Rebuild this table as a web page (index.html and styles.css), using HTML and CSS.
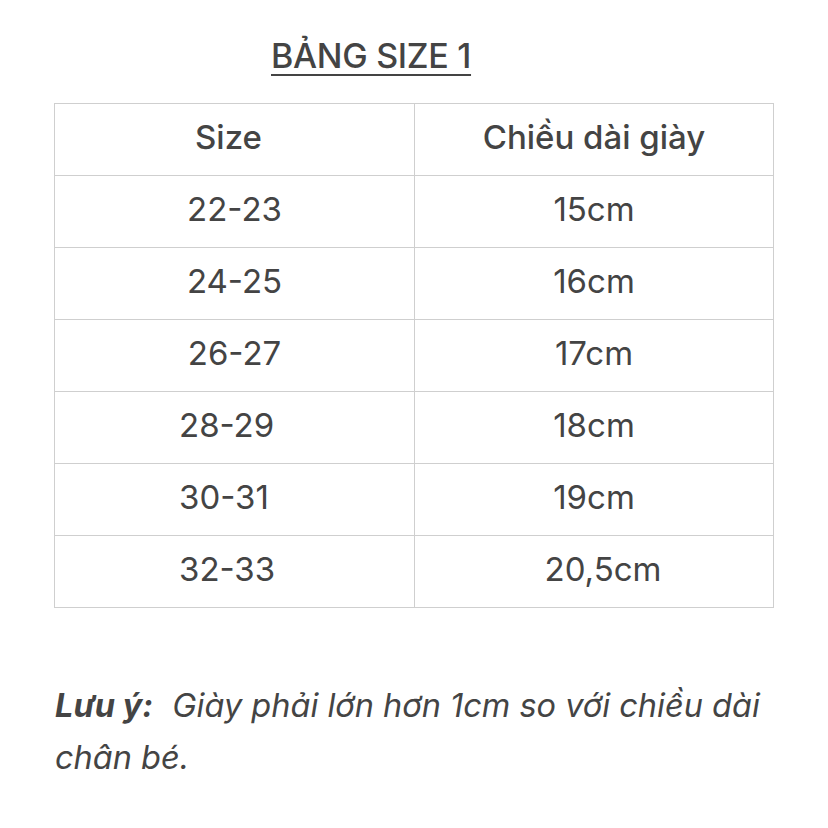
FILE: index.html
```html
<!DOCTYPE html>
<html lang="vi">
<head>
<meta charset="utf-8">
<link rel="stylesheet" href="styles.css">
</head>
<body>
<div class="page">
  <h1 class="title">BẢNG SIZE 1</h1>
  <table class="size-table">
    <tr class="head"><th class="size-head">Size</th><th>Chiều dài giày</th></tr>
    <tr><td>22-23</td><td>15cm</td></tr>
    <tr><td>24-25</td><td>16cm</td></tr>
    <tr><td>26-27</td><td>17cm</td></tr>
    <tr><td class="left">28-29</td><td>18cm</td></tr>
    <tr><td class="left">30-31</td><td>19cm</td></tr>
    <tr><td class="left">32-33</td><td class="shift-right">20,5cm</td></tr>
  </table>
  <p class="note"><b class="label">Lưu ý:</b> Giày phải lớn hơn 1cm so với chiều dài chân bé.</p>
</div>
</body>
</html>
```
FILE: styles.css
```css
html, body { margin: 0; padding: 0; background: #fff; }
body { font-family: Inter, "Liberation Sans", sans-serif; color: #444; }
.page { padding: 36px 54px 0 54px; width: 720px; }
.title {
  margin: 0 0 27px 217px;
  font-size: 34px;
  font-weight: 500;
  text-decoration: underline;
  text-underline-offset: 6px;
  text-decoration-thickness: 2px;
  line-height: 40px;
  letter-spacing: -0.3px;
}
.size-table {
  border-collapse: collapse;
  width: 720px;
  table-layout: fixed;
}
.size-table th, .size-table td {
  box-sizing: border-box;
  border: 1px solid #cfcfcf;
  height: 72px;
  padding: 0 0 6px 0;
  text-align: center;
  font-size: 33px;
  white-space: pre;
}
.size-table th { font-weight: 500; }
.size-table td { font-weight: 400; }
.size-table th:first-child { width: 360px; }
.size-table .size-head { padding-right: 12px; }
.size-table td.left { text-align: left; padding-left: 124px; }
.size-table td.shift-right { padding-left: 18px; }
.note {
  margin: 72px 0 0 1px;
  font-size: 32.5px;
  line-height: 52px;
  font-style: italic;
  font-weight: 400;
  width: 720px;
}
.note .label { font-weight: 700; display: inline-block; margin-right: 10px; }
```
